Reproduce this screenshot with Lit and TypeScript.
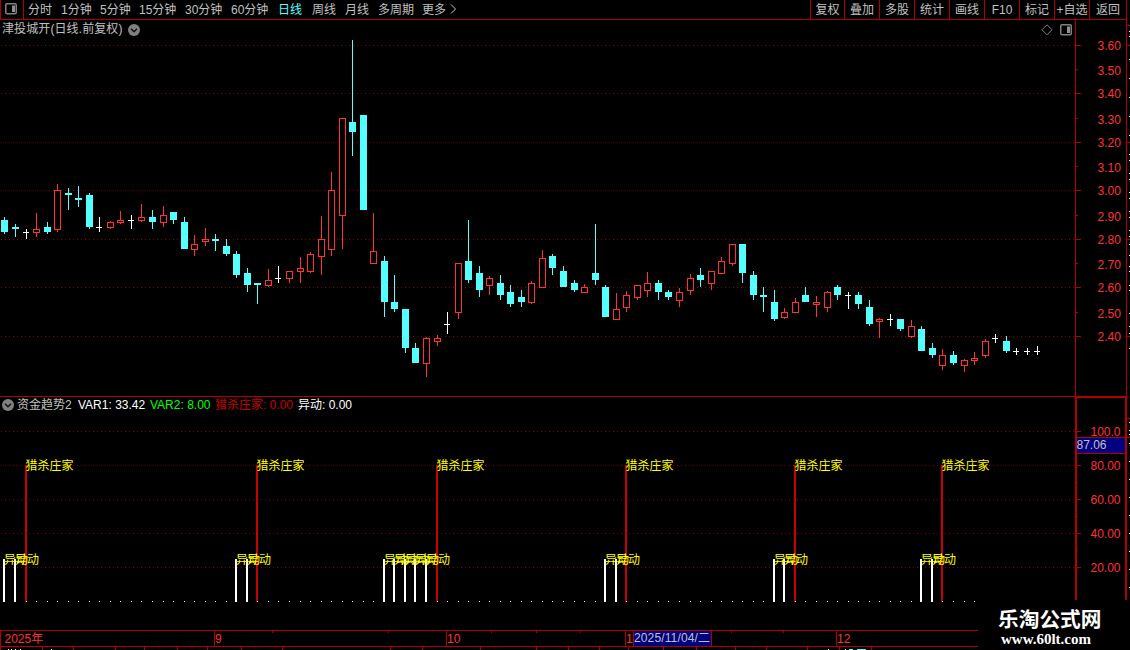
import { LitElement, css, html, svg } from 'lit';
import { classMap } from 'lit/directives/class-map.js';

type Kind = 'up' | 'down' | 'flat';

// x, high, body top, body bottom, low, kind
type Candle = [number, number, number, number, number, Kind];

const CANDLES: Candle[] = [
  [4, 217, 220, 232, 234, 'down'], [15, 224, 227, 229, 237, 'down'], [26, 229, 232, 233, 239, 'flat'],
  [36, 213, 229, 233, 237, 'up'], [47, 222, 227, 232, 234, 'down'], [57, 184, 190, 230, 232, 'up'],
  [68, 188, 193, 195, 210, 'down'], [78, 186, 198, 200, 207, 'down'], [89, 193, 195, 227, 229, 'down'],
  [99, 217, 227, 228, 232, 'flat'], [110, 221, 222, 228, 229, 'up'], [120, 211, 220, 223, 224, 'up'],
  [131, 215, 220, 221, 229, 'flat'], [141, 204, 217, 221, 222, 'up'], [152, 210, 217, 222, 229, 'down'],
  [163, 206, 215, 223, 227, 'up'], [173, 212, 212, 220, 224, 'down'], [184, 217, 222, 249, 249, 'down'],
  [194, 235, 244, 250, 256, 'up'], [205, 228, 239, 242, 246, 'up'], [215, 234, 239, 241, 251, 'down'],
  [226, 239, 246, 254, 256, 'down'], [236, 251, 254, 275, 278, 'down'], [247, 268, 273, 285, 292, 'down'],
  [257, 283, 283, 285, 304, 'down'], [268, 269, 280, 286, 287, 'up'], [278, 266, 278, 279, 283, 'flat'],
  [289, 271, 271, 279, 283, 'up'], [300, 257, 268, 272, 283, 'up'], [310, 252, 254, 272, 273, 'up'],
  [321, 216, 239, 257, 275, 'up'], [331, 172, 190, 250, 256, 'up'], [342, 118, 118, 216, 249, 'up'],
  [352, 40, 122, 132, 156, 'down'], [363, 115, 115, 210, 210, 'down'], [373, 213, 251, 264, 264, 'up'],
  [384, 256, 261, 302, 317, 'down'], [394, 275, 302, 309, 312, 'down'], [405, 309, 309, 348, 353, 'down'],
  [415, 343, 348, 363, 363, 'down'], [426, 337, 338, 364, 377, 'up'], [437, 335, 338, 342, 346, 'up'],
  [447, 312, 324, 325, 334, 'flat'], [458, 263, 263, 313, 319, 'up'], [468, 220, 261, 280, 283, 'down'],
  [479, 266, 273, 290, 297, 'down'], [489, 276, 278, 286, 295, 'up'], [500, 275, 283, 295, 300, 'down'],
  [510, 285, 292, 304, 307, 'down'], [521, 290, 297, 302, 307, 'down'], [531, 281, 283, 303, 304, 'up'],
  [542, 250, 258, 288, 288, 'up'], [552, 254, 256, 268, 275, 'down'], [563, 266, 271, 287, 287, 'down'],
  [574, 280, 283, 290, 292, 'down'], [584, 284, 287, 293, 293, 'up'], [595, 224, 273, 280, 285, 'down'],
  [605, 285, 287, 317, 317, 'down'], [616, 293, 309, 320, 320, 'up'], [626, 291, 295, 308, 312, 'up'],
  [637, 285, 285, 298, 300, 'up'], [647, 272, 283, 291, 297, 'up'], [658, 280, 283, 292, 300, 'down'],
  [668, 290, 292, 297, 300, 'down'], [679, 288, 292, 301, 307, 'up'], [690, 274, 278, 291, 295, 'up'],
  [700, 268, 275, 280, 287, 'down'], [711, 271, 271, 284, 290, 'up'], [721, 257, 261, 274, 274, 'up'],
  [732, 244, 244, 264, 266, 'up'], [742, 244, 244, 273, 283, 'down'], [753, 271, 275, 295, 300, 'down'],
  [763, 287, 295, 297, 312, 'down'], [774, 290, 302, 319, 321, 'down'], [784, 308, 312, 318, 319, 'up'],
  [795, 298, 302, 313, 313, 'up'], [805, 287, 295, 302, 302, 'down'], [816, 296, 302, 305, 317, 'up'],
  [827, 291, 292, 308, 312, 'up'], [837, 285, 287, 295, 300, 'down'], [848, 292, 295, 296, 309, 'flat'],
  [858, 292, 295, 304, 309, 'down'], [869, 300, 307, 324, 326, 'down'], [879, 318, 319, 322, 338, 'up'],
  [890, 314, 319, 320, 326, 'flat'], [900, 319, 319, 329, 331, 'down'], [911, 320, 326, 337, 338, 'up'],
  [921, 326, 329, 351, 351, 'down'], [932, 343, 348, 355, 358, 'down'], [942, 349, 355, 366, 370, 'up'],
  [953, 351, 355, 363, 365, 'down'], [964, 359, 360, 366, 372, 'up'], [974, 352, 358, 361, 365, 'up'],
  [985, 339, 341, 356, 358, 'up'], [995, 334, 338, 339, 343, 'flat'], [1006, 336, 341, 351, 353, 'down'],
  [1016, 348, 351, 352, 355, 'flat'], [1027, 348, 351, 352, 355, 'flat'], [1037, 346, 351, 352, 355, 'flat']
];

const PERIODS = ['分时', '1分钟', '5分钟', '15分钟', '30分钟', '60分钟', '日线', '周线', '月线', '多周期', '更多'];
const TOOLS = ['复权', '叠加', '多股', '统计', '画线', 'F10', '标记', '+自选', '返回'];

const PRICE_GRID = [45, 93, 142, 190, 239, 287, 336];
const PRICE_MINOR = [69, 118, 166, 215, 263, 312];
const PRICES: [string, number][] = [
  ['3.60', 50], ['3.50', 75], ['3.40', 98], ['3.30', 124], ['3.20', 147], ['3.10', 172], ['3.00', 195],
  ['2.90', 221], ['2.80', 244], ['2.70', 269], ['2.60', 292], ['2.50', 318], ['2.40', 341]
];

const TREND_GRID = [431, 465, 499, 533, 567];
const TREND_MINOR = [482, 516, 550];
const TREND_LABELS = ['100.0', '80.00', '60.00', '40.00', '20.00'];

const HUNTS = [26, 257, 437, 626, 795, 942];
const MOVES = [4, 15, 236, 247, 384, 394, 405, 415, 426, 605, 616, 774, 784, 921, 932];

const MONTHS: [string, number][] = [['9', 214], ['10', 446], ['1', 625], ['12', 836]];
const WEEK_TICKS = [272, 388, 491, 536, 580, 731, 783];
const TAB_EDGES = [
  0, 42, 73, 115, 144, 177, 207, 241, 282, 390, 422, 480, 536, 568, 599, 628, 663, 696, 735, 766, 807, 839, 871
];

const EDGE_UPPER = [
  31, 36, 59, 78, 97, 116, 135, 154, 160, 173, 179, 192, 198, 211, 217, 230, 236, 244, 255, 266, 271, 285, 290, 313,
  326, 333, 348
];
const EDGE_LOWER = [422, 430, 434, 443, 461, 479, 497, 515, 533, 551, 569, 587];

const box = (x: number, y: number, w: number, h: number, cls: string) =>
  svg`<rect class=${cls} x=${x} y=${y} width=${w} height=${h}></rect>`;

const gridLine = (y: number) => svg`<line class="grid" x1="1" x2="1075" y1=${y + 0.5} y2=${y + 0.5}></line>`;

const panelIcon = html`
  <svg class="panel-icon" width="12" height="12" viewBox="0 0 12 12">
    <rect x="0.75" y="0.75" width="10.5" height="10" rx="1.2"></rect>
    <path d="M7 2.5h3v6.5h-3z"></path>
  </svg>
`;

const chevron = html`
  <svg class="chevron" width="12" height="12" viewBox="0 0 12 12">
    <circle cx="6" cy="6" r="6"></circle>
    <path d="M3 4.7l3 3 3-3"></path>
  </svg>
`;

const baseStyles = css`
  :host {
    display: block;
    font: 12px 'Liberation Sans', 'Noto Sans CJK SC', sans-serif;
    color: #c0c0c0;
    white-space: nowrap;
  }

  svg {
    display: block;
  }

  text {
    font: 12px 'Liberation Sans', 'Noto Sans CJK SC', sans-serif;
  }

  rect {
    shape-rendering: crispEdges;
  }

  .border {
    fill: #b00000;
  }

  .grid {
    stroke: #900000;
    stroke-dasharray: 1 3;
    shape-rendering: crispEdges;
  }

  .axis-text {
    fill: #ff3232;
  }

  .cursor-box {
    fill: #000080;
  }

  .cursor-text {
    fill: #c0c0c0;
  }

  .white {
    fill: #ffffff;
  }

  .panel-icon rect {
    fill: none;
    stroke: #808080;
    stroke-width: 1.5;
    shape-rendering: auto;
  }

  .panel-icon path {
    fill: #909090;
  }

  .chevron circle {
    fill: #808080;
  }

  .chevron path {
    fill: none;
    stroke: #101010;
    stroke-width: 1.5;
  }
`;

export class TopToolbar extends LitElement {
  static styles = [
    baseStyles,
    css`
      .bar {
        display: grid;
        grid-template-columns: 24px 786px 317px;
        grid-template-rows: 20px;
        line-height: 20px;
      }

      .toggle {
        box-sizing: border-box;
        border: solid #b00000;
        border-width: 0 1px 1px;
        padding: 3px 0 0 4px;
      }

      .periods {
        display: grid;
        grid-template-columns: 33px 39px 39px 46px 46px 47px 34px 33px 33px 44px 28px 8px;
        grid-template-rows: 19px;
        padding-left: 4px;
        border-bottom: 1px solid #b00000;
      }

      .active {
        color: #54ffff;
      }

      .more {
        padding-top: 4px;
      }

      .more path {
        fill: none;
        stroke: #c0c0c0;
      }

      .tools {
        display: grid;
        grid-template-columns: 34px 35px 35px 35px 35px 35px 35px 35px 38px;
        grid-template-rows: 19px;
        border-bottom: 1px solid #b00000;
      }

      .tool {
        border-left: 1px solid #b00000;
        text-align: center;
      }

      .tool:last-child {
        border-right: 1px solid #b00000;
      }
    `
  ];

  render() {
    return html`
      <div class="bar">
        <div class="toggle">${panelIcon}</div>
        <div class="periods">
          ${PERIODS.map((name) => html`<span class=${classMap({ active: name === '日线' })}>${name}</span>`)}
          <svg class="more" width="8" height="10" viewBox="0 0 8 10"><path d="M1 0.5l4.5 4.5-4.5 4.5"></path></svg>
        </div>
        <div class="tools">${TOOLS.map((name) => html`<span class="tool">${name}</span>`)}</div>
      </div>
    `;
  }
}

customElements.define('top-toolbar', TopToolbar);

export class PricePanel extends LitElement {
  static styles = [
    baseStyles,
    css`
      .panel {
        display: grid;
        height: 376px;
      }

      .chart,
      .title {
        grid-area: 1 / 1;
      }

      .title {
        display: flex;
        align-items: center;
        height: 19px;
        width: 1072px;
        box-sizing: border-box;
        padding-left: 2px;
        line-height: 18px;
      }

      .name {
        width: 126px;
        padding-bottom: 1px;
        letter-spacing: 0.1px;
      }

      .actions {
        display: flex;
        gap: 7px;
        margin-left: auto;
      }

      .diamond path {
        fill: none;
        stroke: #808080;
      }

      .up {
        fill: #ff3232;
      }

      .hollow {
        fill: #000000;
        stroke: #ff3232;
      }

      .down {
        fill: #54ffff;
      }

      .flat {
        fill: #ffffff;
      }
    `
  ];

  candle([x, high, top, bottom, low, kind]: Candle) {
    if (kind === 'up') {
      return svg`
        ${box(x, high, 1, low - high, 'up')}
        ${box(x - 2.5, top + 0.5, 6, bottom - top - 1, 'hollow')}
      `;
    }
    return svg`
      ${box(x, high, 1, low - high, kind)}
      ${box(x - 3, top, kind === 'flat' ? 6 : 7, bottom - top, kind)}
    `;
  }

  render() {
    return html`
      <div class="panel">
        <svg class="chart" width="1130" height="376" viewBox="0 20 1130 376">
          ${PRICE_GRID.map(gridLine)}
          ${CANDLES.map((c) => this.candle(c))}
          ${box(1075, 20, 1, 376, 'border')}
          ${box(1126, 20, 1, 376, 'border')}
          ${PRICE_GRID.map((y) => box(1076, y, 5, 1, 'border'))}
          ${PRICE_MINOR.map((y) => box(1076, y, 2, 1, 'border'))}
          ${PRICES.map(([label, y]) => svg`<text class="axis-text" x="1097.5" y=${y}>${label}</text>`)}
          ${EDGE_UPPER.map((y) => box(1129, y, 1, 1, 'white'))}
          ${[25, 45, 142, 239, 336].map((y) => box(1127, y, 3, 1, 'border'))}
        </svg>
        <div class="title">
          <span class="name">津投城开(日线.前复权)</span>
          ${chevron}
          <div class="actions">
            <svg class="diamond" width="12" height="12" viewBox="0 0 12 12"><path d="M6 0.8l5 5-5 5-5-5z"></path></svg>
            ${panelIcon}
          </div>
        </div>
      </div>
    `;
  }
}

customElements.define('price-panel', PricePanel);

export class TrendPanel extends LitElement {
  static styles = [
    baseStyles,
    css`
      .panel {
        display: grid;
        height: 234px;
      }

      .chart,
      .legend {
        grid-area: 1 / 1;
      }

      .legend {
        display: flex;
        align-items: center;
        height: 18px;
        padding-left: 2px;
        line-height: 18px;
      }

      .name {
        width: 61px;
        padding-left: 3px;
      }

      .var1 {
        width: 72px;
        color: #ffffff;
      }

      .var2 {
        width: 65px;
        color: #00ff00;
      }

      .hunt {
        width: 83px;
        color: #c80000;
      }

      .move {
        color: #ffffff;
      }

      .hunt-bar {
        fill: #c80000;
      }

      .signal {
        fill: #ffff00;
      }
    `
  ];

  render() {
    const idle = CANDLES.map(([x]) => x).filter((x) => x < 980 && !MOVES.includes(x));
    return html`
      <div class="panel">
        <svg class="chart" width="1130" height="234" viewBox="0 396 1130 234">
          ${box(0, 396, 1127, 1, 'border')}
          ${TREND_GRID.map(gridLine)}
          ${MOVES.map((x) => box(x - 1, 559, 2, 43, 'white'))}
          ${HUNTS.map((x) => box(x - 1, 465, 2, 137, 'hunt-bar'))}
          ${MOVES.map((x) => svg`<text class="signal" x=${x} y="563.5">异动</text>`)}
          ${HUNTS.map((x) => svg`<text class="signal" x=${x - 0.5} y="469.5">猎杀庄家</text>`)}
          ${idle.map((x) => box(x, 601, 1, 1, 'white'))}
          ${box(1075, 396, 52, 2, 'border')}
          ${box(1075, 396, 2, 204, 'border')}
          ${box(1125, 396, 2, 204, 'border')}
          ${TREND_GRID.map((y) => box(1077, y, 4, 1, 'border'))}
          ${TREND_MINOR.map((y) => box(1077, y, 1, 1, 'border'))}
          ${TREND_LABELS.map((label, i) => svg`<text class="axis-text" x="1090.5" y=${TREND_GRID[i] + 5}>${label}</text>`)}
          ${box(1077, 437, 48, 17, 'border')}
          ${box(1077, 438, 48, 15, 'cursor-box')}
          <text class="cursor-text" x="1076.5" y="449">87.06</text>
          ${EDGE_LOWER.map((y) => box(1129, y, 1, 1, 'white'))}
          ${[418, 437].map((y) => box(1127, y, 3, 1, 'border'))}
        </svg>
        <div class="legend">
          ${chevron}
          <span class="name">资金趋势2</span>
          <span class="var1">VAR1: 33.42</span>
          <span class="var2">VAR2: 8.00</span>
          <span class="hunt">猎杀庄家: 0.00</span>
          <span class="move">异动: 0.00</span>
        </div>
      </div>
    `;
  }
}

customElements.define('trend-panel', TrendPanel);

export class TimeAxis extends LitElement {
  static styles = [
    baseStyles,
    css`
      .quote {
        fill: #54ffff;
      }
    `
  ];

  render() {
    return html`
      <svg width="978" height="20" viewBox="0 630 978 20">
        ${box(0, 630, 978, 1, 'border')}
        ${box(0, 646, 978, 1, 'border')}
        ${box(0, 630, 1, 20, 'border')}
        <text class="axis-text" x="4.5" y="643">2025年</text>
        ${MONTHS.map(([label, x]) => svg`
          ${box(x, 631, 1, 15, 'border')}
          <text class="axis-text" x=${x + 1} y="643">${label}</text>
        `)}
        ${WEEK_TICKS.map((x) => box(x, 631, 1, 2, 'border'))}
        ${box(633, 631, 79, 15, 'border')}
        ${box(634, 631, 77, 15, 'cursor-box')}
        <text class="cursor-text" x="634" y="642" textLength="76">2025/11/04/二</text>
        ${TAB_EDGES.map((x) => box(x, 647, 1, 3, 'border'))}
        ${[8, 11, 15, 20, 51, 828, 845].map((x) => box(x, 649, 1, 1, 'white'))}
        ${box(849, 649, 4, 1, 'quote')}
        ${box(857, 649, 9, 1, 'quote')}
      </svg>
    `;
  }
}

customElements.define('time-axis', TimeAxis);

export class AppRoot extends LitElement {
  static styles = css`
    :host {
      display: block;
      position: relative;
      width: 1130px;
      height: 650px;
      overflow: hidden;
      background: #000000;
    }

    .watermark {
      position: absolute;
      right: 0;
      bottom: 0;
      width: 152px;
      height: 50px;
      box-sizing: border-box;
      padding: 6px 0 0 20px;
      background: #000000;
      color: #ffffff;
    }

    .site {
      font: bold 20.7px/25px 'Noto Sans CJK SC', sans-serif;
      white-space: nowrap;
    }

    .url {
      padding-left: 3px;
      font: bold 15px/16px 'Liberation Serif', serif;
    }
  `;

  render() {
    return html`
      <top-toolbar></top-toolbar>
      <price-panel></price-panel>
      <trend-panel></trend-panel>
      <time-axis></time-axis>
      <div class="watermark">
        <div class="site">乐淘公式网</div>
        <div class="url">www.60lt.com</div>
      </div>
    `;
  }
}

customElements.define('app-root', AppRoot);
